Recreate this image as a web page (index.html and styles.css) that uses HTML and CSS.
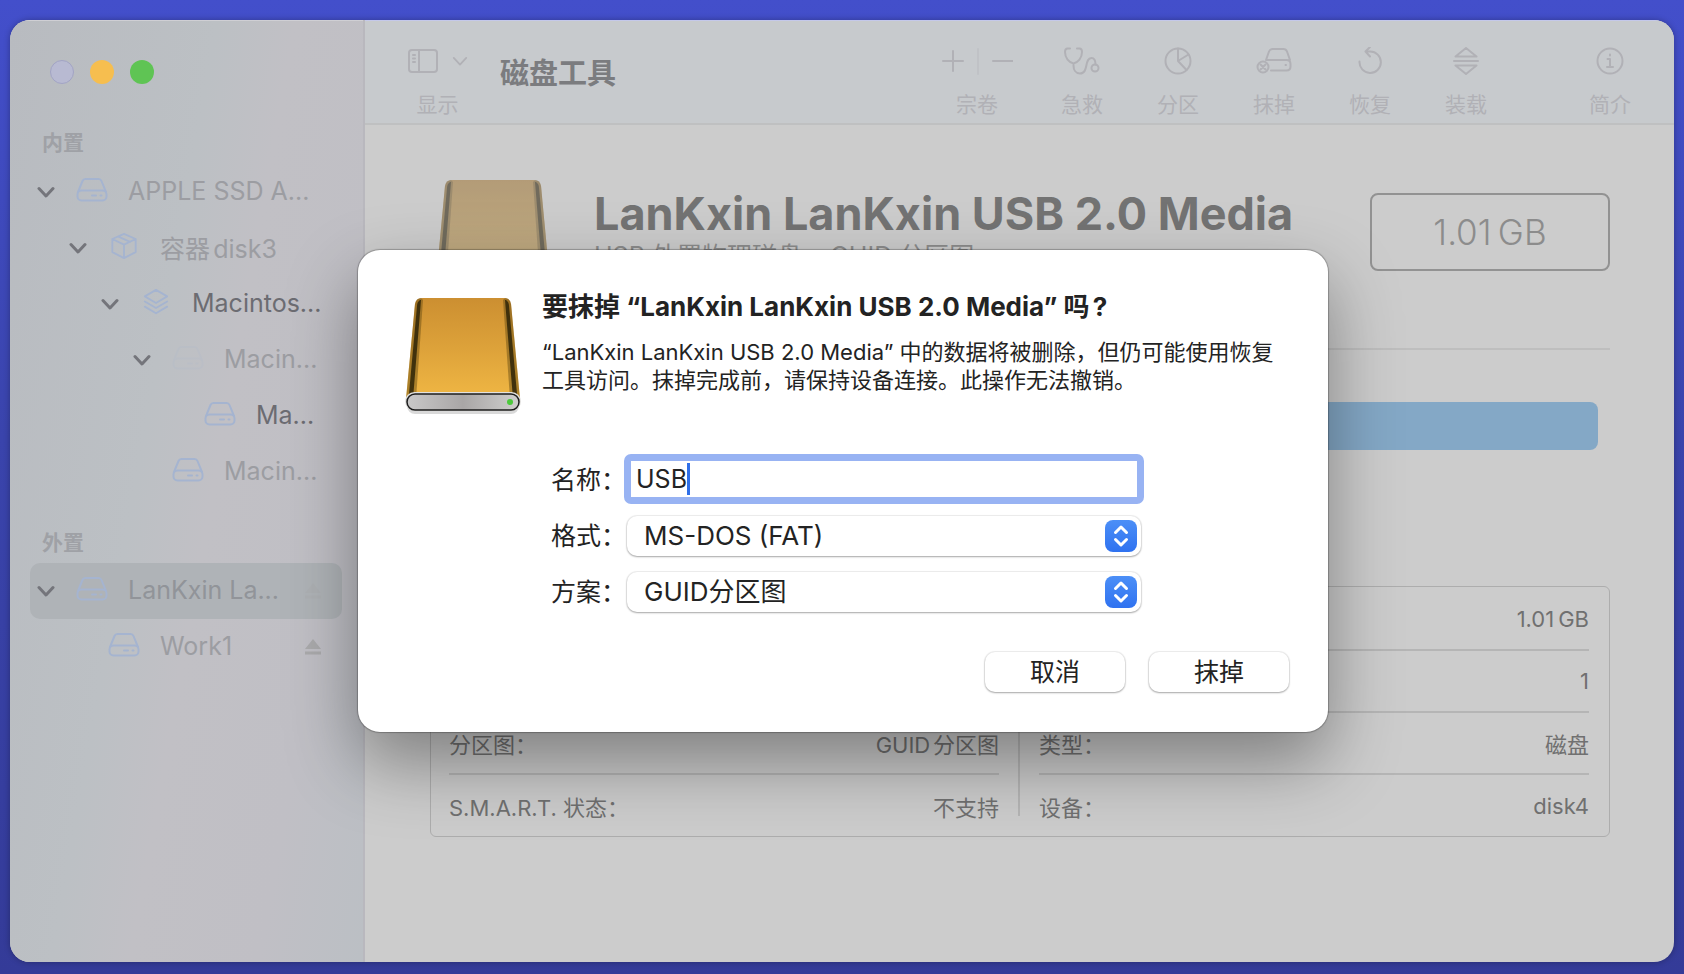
FILE: index.html
```html
<!DOCTYPE html>
<html lang="zh-CN">
<head>
    <meta charset="UTF-8">
    <meta name="viewport" content="width=device-width, initial-scale=1.0">
    <title>磁盘工具</title>
    <link rel="stylesheet" href="styles.css">
</head>
<body>
    <!-- 共用图标 -->
    <svg class="sprite" aria-hidden="true">
        <symbol id="chevron" viewBox="0 0 18 18"><path d="M2 5.500l7 7.500 7-7.500"/></symbol>
        <symbol id="disk" viewBox="0 0 32 26">
            <path d="M2 15L6.500 4Q7.300 2 9.500 2h13q2.200 0 3 2L30 15"/>
            <rect x="1.500" y="13.500" width="29" height="10" rx="4"/>
            <path d="M16 18.500h4M24.500 18.500h1"/>
        </symbol>
        <symbol id="box" viewBox="0 0 32 30">
            <path d="M16 2l12.500 5.500v14L16 28 3.500 21.500v-14zM3.500 7.500L16 13.500l12.500-6M16 13.500V28M10 5l12.500 5.500"/>
        </symbol>
        <symbol id="layers" viewBox="0 0 32 30">
            <path d="M16 2l12 7-12 7L4 9zM4 14.500l12 7 12-7M4 20l12 7 12-7"/>
        </symbol>
        <symbol id="eject" viewBox="0 0 18 18"><path d="M9 1l8 10H1zM1 13.500h16v3H1z"/></symbol>
        <symbol id="stepper" viewBox="0 0 32 32"><path d="M10.500 12.500L16 7l5.500 5.500M10.500 19.500L16 25l5.500-5.500"/></symbol>
        <symbol id="drive" viewBox="0 0 120 120">
            <defs>
                <linearGradient id="gold" x1="0" y1="0" x2="0" y2="1">
                    <stop offset="0" stop-color="#cc8f31"/>
                    <stop offset="0.500" stop-color="#dda23a"/>
                    <stop offset="1" stop-color="#f0b744"/>
                </linearGradient>
                <linearGradient id="silver" x1="0" x2="1">
                    <stop offset="0" stop-color="#c9c8c8"/>
                    <stop offset="0.500" stop-color="#a9a6a6"/>
                    <stop offset="1" stop-color="#cfcfcd"/>
                </linearGradient>
            </defs>
            <rect x="4" y="101" width="112" height="16" rx="8" fill="#000" opacity="0.150"/>
            <path d="M19 1h82q6 0 7 6l9 95H3L12 7q1-6 7-6z" fill="url(#gold)"/>
            <path d="M18 1Q13 1 12 7L3 102h10L20 3z" fill="#6b5014" opacity="0.500"/>
            <path d="M102 1q5 0 6 6l9 95h-10L100 3z" fill="#6b5014" opacity="0.500"/>
            <path d="M17 3q-3 2-3 6L5.500 102H10L18 3z" fill="#2e2408" opacity="0.850"/>
            <path d="M103 3q3 2 3 6l8.500 93H110L102 3z" fill="#2e2408" opacity="0.850"/>
            <rect x="2" y="95" width="116" height="19" rx="9.500" fill="#e2e1df"/>
            <rect x="4" y="97" width="112" height="16" rx="8" fill="url(#silver)" stroke="#1c1c1c" stroke-width="1.500"/>
            <circle cx="107" cy="105" r="3" fill="#4cc93c"/>
        </symbol>
    </svg>

    <div class="window">
        <nav class="sidebar">
            <div class="lights">
                <button class="light close" aria-label="关闭"></button>
                <button class="light minimize" aria-label="最小化"></button>
                <button class="light zoom" aria-label="缩放"></button>
            </div>

            <h2>内置</h2>
            <ul class="tree">
                <li class="level-0"><button class="toggle" aria-label="展开"><svg><use href="#chevron"/></svg></button><svg class="icon"><use href="#disk"/></svg><span>APPLE SSD A...</span></li>
                <li class="level-1"><button class="toggle" aria-label="展开"><svg><use href="#chevron"/></svg></button><svg class="icon"><use href="#box"/></svg><span>容器disk3</span></li>
                <li class="level-2 mounted"><button class="toggle" aria-label="展开"><svg><use href="#chevron"/></svg></button><svg class="icon"><use href="#layers"/></svg><span>Macintos...</span></li>
                <li class="level-3"><button class="toggle" aria-label="展开"><svg><use href="#chevron"/></svg></button><svg class="icon faint"><use href="#disk"/></svg><span>Macin...</span></li>
                <li class="level-4 mounted"><i class="toggle"></i><svg class="icon"><use href="#disk"/></svg><span>Ma...</span></li>
                <li class="level-3"><i class="toggle"></i><svg class="icon"><use href="#disk"/></svg><span>Macin...</span></li>
            </ul>

            <h2>外置</h2>
            <ul class="tree">
                <li class="level-0 selected"><button class="toggle" aria-label="展开"><svg><use href="#chevron"/></svg></button><svg class="icon"><use href="#disk"/></svg><span>LanKxin La...</span><button class="eject" aria-label="推出"><svg><use href="#eject"/></svg></button></li>
                <li class="level-1"><i class="toggle"></i><svg class="icon"><use href="#disk"/></svg><span>Work1</span><button class="eject" aria-label="推出"><svg><use href="#eject"/></svg></button></li>
            </ul>
        </nav>

        <main>
            <header class="toolbar">
                <button class="tool view">
                    <span class="glyphs">
                        <svg width="30" height="28" viewBox="0 0 30 28"><rect x="1" y="3" width="28" height="22" rx="3"/><path d="M11 3v22M5 8h2M5 11.500h2M5 15h2"/></svg>
                        <svg width="16" height="18" viewBox="0 0 18 18"><use href="#chevron"/></svg>
                    </span>
                    <span>显示</span>
                </button>
                <h1>磁盘工具</h1>
                <button class="tool volume">
                    <svg width="72" height="28" viewBox="0 0 72 28"><path d="M2 14h20M12 4v20M52 14h20"/><path d="M37 2v25" opacity="0.300"/></svg>
                    <span>宗卷</span>
                </button>
                <button class="tool">
                    <svg width="36" height="28" viewBox="0 0 36 28"><path d="M6 1.500H3.500Q1 1.500 1 5c0 6 4 10.500 8.500 11.500C14 15.500 18 11 18 5q0-3.500-2.500-3.500H13M9.500 16.500v2c0 4 2 8 6.500 8 9 0 4-15.500 11.500-15.500 3 0 4 3 4 6.500"/><circle cx="31" cy="21" r="3.500"/></svg>
                    <span>急救</span>
                </button>
                <button class="tool">
                    <svg width="28" height="28" viewBox="0 0 28 28"><circle cx="14" cy="14" r="12.500"/><path d="M14 1.500V14l8.500 9M14 14l10.500-6.500"/></svg>
                    <span>分区</span>
                </button>
                <button class="tool">
                    <svg width="36" height="28" viewBox="0 0 36 28"><path d="M10 13L13 4.500Q14 2 16.500 2h11Q30 2 31 4.500L34 13M11 13h19.500q4 0 4 4v2.500q0 4-4 4H15"/><circle cx="7" cy="20" r="5.500"/><path d="M4.500 17.500l5 5M9.500 17.500l-5 5M29.500 18h.500"/></svg>
                    <span>抹掉</span>
                </button>
                <button class="tool">
                    <svg width="28" height="28" viewBox="0 0 28 28"><path d="M3.500 14.500A10.700 10.700 0 1 0 14 4.500h-4.500M14 0L9.500 4.500 14 9.500"/></svg>
                    <span>恢复</span>
                </button>
                <button class="tool">
                    <svg width="28" height="28" viewBox="0 0 28 28"><path d="M14 1l10.500 8.500h-21zM2 14h24M3.500 18.500h21L14 27z"/></svg>
                    <span>装载</span>
                </button>
                <button class="tool info">
                    <svg width="28" height="28" viewBox="0 0 28 28"><circle cx="14" cy="14" r="12.500"/><path d="M11.500 12H14v8M11 20h6M14 7.500v1"/></svg>
                    <span>简介</span>
                </button>
            </header>

            <section class="content">
                <div class="summary">
                    <svg class="drive"><use href="#drive"/></svg>
                    <div class="names">
                        <h2>LanKxin LanKxin USB 2.0 Media</h2>
                        <p>USB 外置物理磁盘 • GUID 分区图</p>
                    </div>
                    <div class="size">1.01&thinsp;GB</div>
                </div>
                <hr>
                <div class="usage"></div>
                <div class="details">
                    <table>
                        <tr><th>位置：</th><td></td></tr>
                        <tr><th>连接：</th><td></td></tr>
                        <tr><th>分区图：</th><td>GUID分区图</td></tr>
                        <tr><th>S.M.A.R.T. 状态：</th><td>不支持</td></tr>
                    </table>
                    <div class="divider"></div>
                    <table>
                        <tr><th>容量：</th><td>1.01&thinsp;GB</td></tr>
                        <tr><th>子项计数：</th><td>1</td></tr>
                        <tr><th>类型：</th><td>磁盘</td></tr>
                        <tr><th>设备：</th><td>disk4</td></tr>
                    </table>
                </div>
            </section>
        </main>

        <div class="overlay">
            <form class="dialog" role="dialog" aria-labelledby="dialog-title">
                <div class="message">
                    <svg class="drive"><use href="#drive"/></svg>
                    <div>
                        <h2 id="dialog-title">要抹掉 “LanKxin LanKxin USB 2.0 Media” 吗?</h2>
                        <p>“LanKxin LanKxin USB 2.0 Media” 中的数据将被删除，但仍可能使用恢复<br>工具访问。抹掉完成前，请保持设备连接。此操作无法撤销。</p>
                    </div>
                </div>
                <div class="fields">
                    <label for="name">名称：</label>
                    <div class="text-field">
                        <input id="name" type="text" value="USB">
                        <span class="caret"></span>
                    </div>
                    <label for="format">格式：</label>
                    <div class="popup">
                        <select id="format"><option>MS-DOS (FAT)</option></select>
                        <svg><use href="#stepper"/></svg>
                    </div>
                    <label for="scheme">方案：</label>
                    <div class="popup">
                        <select id="scheme"><option>GUID分区图</option></select>
                        <svg><use href="#stepper"/></svg>
                    </div>
                </div>
                <div class="actions">
                    <button type="button">取消</button>
                    <button type="button">抹掉</button>
                </div>
            </form>
        </div>
    </div>
</body>
</html>
```
FILE: styles.css
```css
* {
    box-sizing: border-box;
}
body {
    display: flex;
    min-height: 100vh;
    margin: 0;
    padding: 20px 10px 12px;
    background: linear-gradient(#434fcb, #3a44ac 45%, #343b98);
    color: #232323;
    font-family: Inter, "Noto Sans CJK SC", sans-serif;
    text-autospace: normal;
}
h1, h2, p, ul {
    margin: 0;
    padding: 0;
}
button, input, select {
    padding: 0;
    border: none;
    background: none;
    color: inherit;
    font: inherit;
    text-autospace: normal;
}
svg {
    flex: none;
    fill: none;
    stroke: currentColor;
    stroke-width: 2;
    stroke-linecap: round;
    stroke-linejoin: round;
}
.sprite {
    position: absolute;
    width: 0;
    height: 0;
}
.window {
    position: relative;
    display: flex;
    flex: 1;
    overflow: hidden;
    border-radius: 20px;
    background: #cccccc;
    box-shadow: 0 0 6px rgba(0, 0, 0, 0.3);
}

/* 边栏 */
.sidebar {
    width: 355px;
    flex: none;
    padding: 40px 21px 20px 20px;
    border-right: 2px solid #b9b8be;
    background: linear-gradient(100deg, #b8bbc0, #bcc0c4 40%, #c1c0c5 55%, #c0bfc5 80%, #bbbfc4);
    box-shadow: inset 0 1px 0 #cfcfd4;
}
.lights {
    display: flex;
    gap: 16px;
    padding-left: 20px;
}
.light {
    width: 24px;
    height: 24px;
    border-radius: 50%;
}
.close {
    border: 1px solid #a2a4c4;
    background: #b8bad2;
}
.minimize {
    background: #f6be4f;
}
.zoom {
    background: #5fc454;
}
.sidebar h2 {
    margin: 44px 0 6px 12px;
    color: #9fa1a6;
    font-size: 21px;
    font-weight: 700;
    line-height: 30px;
}
.sidebar .tree + h2 {
    margin: 28px 0 5px 12px;
}
.tree {
    list-style: none;
    color: #9c9da2;
    font-size: 25px;
}
.tree li {
    display: flex;
    align-items: center;
    height: 56px;
    padding-right: 20px;
    padding-left: 7px;
    border-radius: 10px;
    white-space: nowrap;
}
.tree .level-1 {
    padding-left: 39px;
}
.tree .level-2 {
    padding-left: 71px;
}
.tree .level-3 {
    padding-left: 103px;
}
.tree .level-4 {
    padding-left: 135px;
}
.tree .mounted {
    color: #6c6c72;
}
.tree .selected {
    background: #afb3b7;
    color: #919499;
}
.tree span {
    padding-bottom: 2px;
}
.toggle {
    flex: none;
    width: 18px;
    height: 18px;
    margin-right: 21px;
    color: #74757b;
}
.toggle svg {
    display: block;
    width: 18px;
    height: 18px;
    stroke-width: 3;
}
.tree .icon {
    width: 32px;
    height: 28px;
    margin-right: 20px;
    margin-bottom: 4px;
    color: #a5b4d0;
}
.tree .faint {
    opacity: 0.15;
}
.eject {
    width: 18px;
    height: 18px;
    margin-left: auto;
    color: #aaaaac;
}
.selected .eject {
    opacity: 0.3;
}
.eject svg {
    display: block;
    width: 18px;
    height: 18px;
    fill: currentColor;
    stroke: none;
}

/* 工具栏 */
main {
    flex: 1;
    min-width: 0;
}
.toolbar {
    display: flex;
    height: 105px;
    padding: 27px 16px 0 43px;
    border-bottom: 2px solid #bfc0c1;
    background: #c7cacd;
    color: #b1b1b6;
    box-shadow: inset 0 1px 0 #c4c8ea;
}
.toolbar h1 {
    margin: 0 auto 0 33px;
    color: #7b7c7f;
    font-size: 29px;
    font-weight: 700;
    line-height: 54px;
}
.tool {
    display: flex;
    flex-direction: column;
    align-items: center;
    justify-content: space-between;
    width: 96px;
    height: 72px;
    font-size: 21px;
    line-height: 28px;
}
.tool.view {
    width: 59px;
}
.glyphs {
    display: flex;
    gap: 14px;
    align-items: center;
}
.tool.volume {
    width: 114px;
}
.tool.info {
    margin-left: 48px;
}

/* 所选磁盘 */
.content {
    padding: 54px 64px 0 65px;
}
.drive {
    width: 120px;
    height: 120px;
    stroke: none;
}
.summary {
    display: flex;
    align-items: flex-start;
}
.summary .drive {
    margin-left: 3px;
    opacity: 0.6;
    filter: saturate(0.75) brightness(0.85);
}
.names {
    flex: 1;
    margin: 9px 0 0 41px;
    color: #737373;
    white-space: nowrap;
}
.names h2 {
    font-size: 45px;
    line-height: 52px;
}
.names p {
    color: #8c8c8c;
    font-size: 25px;
    line-height: 32px;
}
.size {
    width: 240px;
    margin-top: 14px;
    border: 2px solid #929292;
    border-radius: 8px;
    color: #8c8c8c;
    font-size: 35px;
    font-weight: 300;
    line-height: 74px;
    text-align: center;
}
hr {
    height: 2px;
    margin: 49px 0 52px;
    border: none;
    background: #bebebe;
}
.usage {
    height: 48px;
    margin: 0 12px 136px 11px;
    border-radius: 8px;
    background: #84a8c6;
}
.details {
    display: grid;
    grid-template-columns: 1fr 2px 1fr;
    gap: 19px;
    padding: 1px 20px 0 18px;
    border: 1px solid #adadad;
    border-radius: 6px;
}
.divider {
    margin: 20px 0;
    background: #b5b5b5;
}
table {
    width: 100%;
    border-collapse: collapse;
    color: #707070;
    font-size: 22px;
}
tr + tr {
    border-top: 2px solid #b5b5b5;
}
th, td {
    height: 62px;
    padding: 0;
    font-weight: 400;
    text-align: left;
}
td {
    text-align: right;
}

/* 抹掉确认对话框 */
.overlay {
    position: absolute;
    inset: 0;
    display: flex;
    align-items: flex-start;
    justify-content: center;
    padding-top: 230px;
    padding-left: 2px;
}
.dialog {
    width: 970px;
    padding: 42px 39px 40px 45px;
    border-radius: 22px;
    background: #ffffff;
    box-shadow: 0 0 1px 1px rgba(0, 0, 0, 0.25), 0 30px 70px rgba(0, 0, 0, 0.38);
}
.message {
    display: flex;
    gap: 19px;
}
.message .drive {
    margin-top: 5px;
}
.message h2 {
    margin-bottom: 16px;
    font-size: 26px;
    line-height: 30px;
    white-space: nowrap;
}
.message p {
    font-size: 22px;
    line-height: 28px;
    white-space: nowrap;
}
.fields {
    display: grid;
    grid-template-columns: 73px 520px;
    grid-auto-rows: 56px;
    align-items: center;
    margin: 34px 0 33px 148px;
    font-size: 25px;
}
.fields label {
    padding-bottom: 3px;
    white-space: nowrap;
}
.text-field {
    position: relative;
}
.text-field input {
    display: block;
    width: 100%;
    height: 50px;
    padding: 0 5px;
    border: 7px solid #98b3f3;
    border-radius: 7px;
    outline: none;
    background: #ffffff;
}
.caret {
    position: absolute;
    top: 9px;
    left: 63px;
    width: 3px;
    height: 32px;
    background: #2f6fe8;
}
.popup {
    position: relative;
    margin: 2px 3px 0;
}
.popup select {
    display: block;
    width: 100%;
    height: 40px;
    padding: 0 44px 2px 17px;
    border-radius: 10px;
    appearance: none;
    background: #ffffff;
    box-shadow: 0 0 1px 1px rgba(0, 0, 0, 0.07), 0 1px 2px rgba(0, 0, 0, 0.3);
    font-size: 26px;
}
.popup svg {
    position: absolute;
    top: 4px;
    right: 4px;
    width: 32px;
    height: 32px;
    border-radius: 8px;
    background: linear-gradient(#4c8ff7, #2f72f0);
    color: #ffffff;
    pointer-events: none;
    stroke-width: 3;
}
.actions {
    display: flex;
    justify-content: flex-end;
    gap: 24px;
}
.actions button {
    width: 140px;
    height: 40px;
    padding-bottom: 4px;
    border-radius: 10px;
    background: #ffffff;
    box-shadow: 0 0 1px 1px rgba(0, 0, 0, 0.07), 0 1px 2px rgba(0, 0, 0, 0.3);
    font-size: 25px;
}
```
